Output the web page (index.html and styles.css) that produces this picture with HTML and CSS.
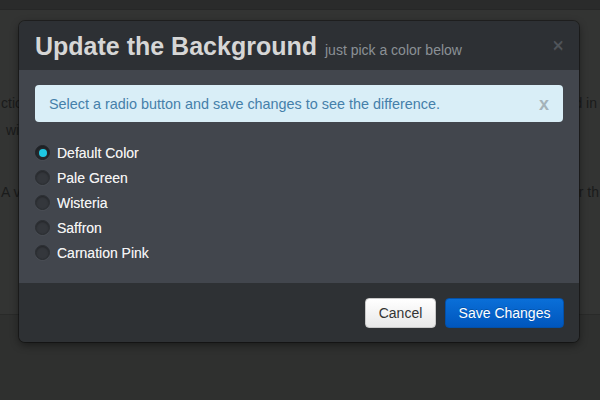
FILE: index.html
```
<!DOCTYPE html>
<html>
<head>
<meta charset="utf-8">
<link rel="stylesheet" href="styles.css">
</head>
<body>
<div class="topbar"></div>
<div class="page">
  <div class="line l1"><span class="left">ctio</span><span class="right">d in</span></div>
  <div class="line l2"><span class="left">wi</span><span class="right"></span></div>
  <div class="line l3"><span class="left">A v</span><span class="right">or th</span></div>
</div>

<div class="modal">
  <div class="modal-header">
    <h3 class="title">Update the Background</h3>
    <span class="subtitle">just pick a color below</span>
    <span class="close">×</span>
  </div>
  <div class="modal-body">
    <div class="alert">
      <span>Select a radio button and save changes to see the difference.</span>
      <span class="alert-close">x</span>
    </div>
    <div class="options">
      <label class="option"><span class="radio checked"></span>Default Color</label>
      <label class="option"><span class="radio"></span>Pale Green</label>
      <label class="option"><span class="radio"></span>Wisteria</label>
      <label class="option"><span class="radio"></span>Saffron</label>
      <label class="option"><span class="radio"></span>Carnation Pink</label>
    </div>
  </div>
  <div class="modal-footer">
    <button class="btn btn-default">Cancel</button>
    <button class="btn btn-primary">Save Changes</button>
  </div>
</div>
</body>
</html>
```
FILE: styles.css
```
* { box-sizing: border-box; }
html, body { margin: 0; padding: 0; }
body {
  width: 600px;
  height: 400px;
  overflow: hidden;
  background: #2f302f;
  font-family: "Liberation Sans", Arial, sans-serif;
  position: relative;
}
.topbar {
  height: 10px;
  background: #2a2b2b;
  border-bottom: 1px solid #262727;
}
.page {
  height: 305px;
  background: #333433;
  border-bottom: 1px solid #292a29;
  padding-top: 85px;
  color: #1a1b1b;
  font-size: 14px;
}
.line {
  display: flex;
  justify-content: space-between;
  height: 20px;
  white-space: nowrap;
}
.l1 { padding: 0 3px 0 1px; }
.l2 { margin-top: 7px; padding-left: 6px; }
.l3 { margin-top: 42px; padding: 0 1px 0 1px; }

.modal {
  position: absolute;
  top: 21px;
  left: 19px;
  width: 560px;
  border-radius: 6px;
  overflow: hidden;
  box-shadow: 0 0 0 1px rgba(0,0,0,0.35), 0 3px 8px rgba(0,0,0,0.45);
}
.modal-header {
  height: 49px;
  background: #2d3034;
  padding: 10px 16px 0 16px;
  display: flex;
  align-items: baseline;
  position: relative;
}
.title {
  margin: 0;
  font-size: 25px;
  line-height: 30px;
  font-weight: bold;
  color: #d6d6d6;
}
.subtitle {
  margin-left: 8px;
  font-size: 14px;
  color: #8b9096;
}
.close {
  position: absolute;
  right: 15px;
  top: 14px;
  font-size: 20px;
  line-height: 20px;
  color: #50555b;
  text-shadow: 0 1px 0 rgba(255,255,255,0.12);
}
.modal-body {
  background: #42464d;
  padding: 15px 16px 18px 16px;
}
.alert {
  height: 37px;
  background: #d9eef7;
  border-radius: 4px;
  padding: 9px 14px 0 14px;
  color: #4580aa;
  font-size: 14.4px;
  line-height: 20px;
  display: flex;
  justify-content: space-between;
}
.alert-close {
  font-weight: bold;
  font-size: 18px;
  color: #a5b3ba;
}
.options {
  margin-top: 18px;
  display: flex;
  flex-direction: column;
}
.option {
  height: 25px;
  display: flex;
  align-items: center;
  color: #f2f2f2;
  font-size: 14px;
  text-shadow: 0 0 0.4px rgba(255,255,255,0.6);
}
.radio {
  width: 15px;
  height: 15px;
  border-radius: 50%;
  background: #34373c;
  border: 1px solid #2a2d31;
  box-shadow: inset 0 1px 2px rgba(0,0,0,0.35), 0 1px 0 rgba(255,255,255,0.04);
  margin-right: 7px;
  display: flex;
  align-items: center;
  justify-content: center;
}
.radio.checked {
  background: #262a2e;
  border-color: #202327;
}
.radio.checked::after {
  content: "";
  width: 8px;
  height: 8px;
  border-radius: 50%;
  background: #1ec9e4;
}
.modal-footer {
  height: 59px;
  background: #2e3134;
  padding: 15px 15px 0 0;
  display: flex;
  justify-content: flex-end;
  gap: 9px;
}
.btn {
  height: 30px;
  border-radius: 4px;
  font-family: "Liberation Sans", Arial, sans-serif;
  font-size: 14px;
  padding: 0;
  cursor: pointer;
}
.btn-default {
  width: 71px;
  color: #333;
  background: linear-gradient(#ffffff, #e8e8e8);
  border: 1px solid #c8c8c8;
}
.btn-primary {
  width: 119px;
  color: #ffffff;
  background: linear-gradient(#0a6fd8, #0056bd);
  border: 1px solid #0350a8;
  text-shadow: 0 -1px 0 rgba(0,0,0,0.2);
}
```
